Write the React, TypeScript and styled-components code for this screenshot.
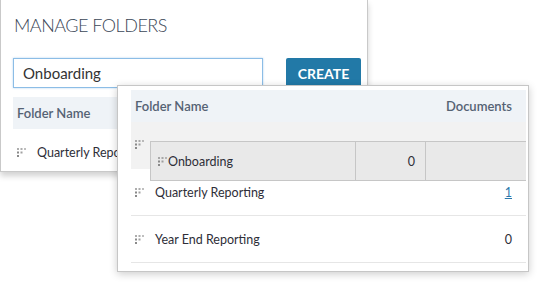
import styled, { createGlobalStyle } from "styled-components";

const GlobalStyle = createGlobalStyle`
  html, body {
    margin: 0;
    padding: 0;
    background: #ffffff;
  }
  body {
    font-family: Lato, "Noto Sans", sans-serif;
    color: #333333;
  }
`;

const Stage = styled.div`
  position: relative;
  width: 541px;
  height: 282px;
  overflow: hidden;
  background: #ffffff;
`;

const BackPanel = styled.div`
  width: 368px;
  height: 172px;
  box-sizing: border-box;
  border: 1px solid #c9c9c9;
  border-top: none;
  box-shadow: 0 4px 6px rgba(0, 0, 0, 0.18);
  padding: 12px 0 0 12px;
  background: #ffffff;
`;

const Title = styled.h1`
  margin: 0 0 0 1px;
  font-size: 18px;
  font-weight: 300;
  color: #3b4757;
  letter-spacing: -0.5px;
  line-height: 26px;
`;

const FormRow = styled.div`
  display: flex;
  gap: 23px;
  margin-top: 20px;
`;

const Input = styled.input`
  width: 250px;
  height: 30px;
  box-sizing: border-box;
  border: 1px solid #8cbde6;
  box-shadow: 0 0 2px rgba(90, 160, 220, 0.45);
  padding: 0 9px;
  font-family: Lato, "Noto Sans", sans-serif;
  font-size: 15px;
  color: #333333;
  outline: none;
`;

const CreateButton = styled.button`
  width: 75px;
  height: 34px;
  border: none;
  border-radius: 2px;
  background: #2279a7;
  color: #ffffff;
  font-family: Lato, "Noto Sans", sans-serif;
  font-size: 14px;
  font-weight: 700;
  padding: 0 0 4px;
`;

const HeaderBar = styled.div`
  display: flex;
  align-items: center;
  justify-content: space-between;
  height: 32px;
  background: #eff3f7;
  padding: 0 14px 0 4px;
  color: #556274;
  font-size: 13px;
  font-weight: 600;
`;

const BackHeader = styled(HeaderBar)`
  margin-top: 5px;
`;

const Row = styled.div<{ $divider?: boolean }>`
  display: flex;
  align-items: center;
  height: 46px;
  padding: 0 14px 0 4px;
  font-size: 12.5px;
  color: #2e2e38;
  border-bottom: ${(p) => (p.$divider ? "1px solid #e6e6e6" : "none")};
`;

const NameCell = styled.div`
  display: flex;
  align-items: center;
  gap: 10px;
  flex: 1;
  white-space: nowrap;
`;

const CountCell = styled.div`
  text-align: right;
`;

const CountLink = styled.a`
  color: #2b78ab;
  text-decoration: underline;
`;

const FrontPanel = styled.div`
  position: absolute;
  left: 117px;
  top: 85px;
  width: 412px;
  height: 187px;
  box-sizing: border-box;
  border: 1px solid #c6c6c6;
  box-shadow: 0 2px 8px rgba(0, 0, 0, 0.2);
  background: #ffffff;
  padding: 4px 2px 0 13px;
`;

const TableWrap = styled.div`
  position: relative;
  overflow: hidden;
  height: 100%;
`;

const PlaceholderRow = styled.div`
  height: 47px;
  background: #f2f2f2;
  padding: 11px 0 0 4px;
  box-sizing: border-box;
`;

const DragHelper = styled.div`
  position: absolute;
  left: 19px;
  top: 51px;
  display: grid;
  grid-template-columns: 204px 70px 120px;
  height: 38px;
  background: #e9e9e9;
  border: 1px solid #c6c6c6;
  font-size: 12.5px;
  color: #2e2e38;
`;

const HelperCell = styled.div<{ $right?: boolean }>`
  display: flex;
  align-items: center;
  justify-content: ${(p) => (p.$right ? "flex-end" : "flex-start")};
  padding: ${(p) => (p.$right ? "0 10px 0 0" : "0 0 0 7px")};
  border-left: 1px solid #c6c6c6;
  &:first-child {
    border-left: none;
  }
`;

function Handle() {
  const dots = [
    [0, 0, 0.7],
    [3.5, 0, 0.7],
    [7, 0, 0.55],
    [0, 3.5, 1],
    [3.5, 3.5, 0.8],
    [0, 7, 1],
  ];
  return (
    <svg width="10" height="9" viewBox="0 0 10 9" style={{ flex: "none" }}>
      {dots.map(([x, y, o], i) => (
        <rect key={i} x={x} y={y} width="2" height="2" fill="#8a8a8a" opacity={o} />
      ))}
    </svg>
  );
}

export default function App() {
  return (
    <Stage>
      <GlobalStyle />
      <BackPanel>
        <Title>MANAGE FOLDERS</Title>
        <FormRow>
          <Input defaultValue="Onboarding" />
          <CreateButton>CREATE</CreateButton>
        </FormRow>
        <BackHeader>
          <span>Folder Name</span>
        </BackHeader>
        <Row>
          <NameCell>
            <Handle />
            Quarterly Reporting
          </NameCell>
        </Row>
      </BackPanel>

      <FrontPanel>
        <TableWrap>
          <HeaderBar>
            <span>Folder Name</span>
            <span>Documents</span>
          </HeaderBar>
          <PlaceholderRow>
            <Handle />
          </PlaceholderRow>
          <Row $divider>
            <NameCell>
              <Handle />
              Quarterly Reporting
            </NameCell>
            <CountCell>
              <CountLink href="#">1</CountLink>
            </CountCell>
          </Row>
          <Row $divider>
            <NameCell>
              <Handle />
              Year End Reporting
            </NameCell>
            <CountCell>0</CountCell>
          </Row>
          <DragHelper>
            <HelperCell>
              <Handle />
              Onboarding
            </HelperCell>
            <HelperCell $right>0</HelperCell>
            <HelperCell />
          </DragHelper>
        </TableWrap>
      </FrontPanel>
    </Stage>
  );
}
